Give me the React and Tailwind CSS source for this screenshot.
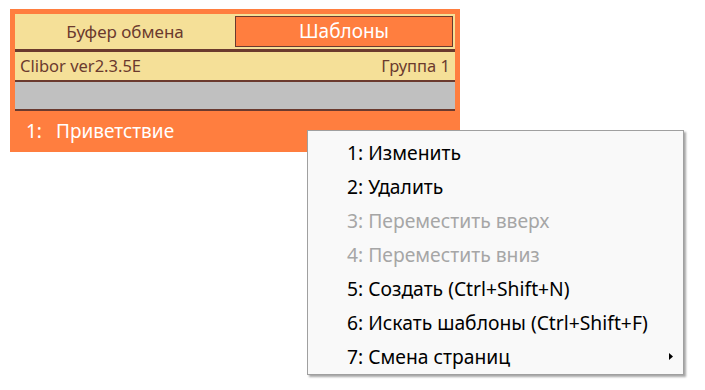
import React from 'react';

const items = [
  { label: '1: Изменить', on: true },
  { label: '2: Удалить', on: true },
  { label: '3: Переместить вверх', on: false },
  { label: '4: Переместить вниз', on: false },
  { label: '5: Создать (Ctrl+Shift+N)', on: true },
  { label: '6: Искать шаблоны (Ctrl+Shift+F)', on: true },
  { label: '7: Смена страниц', on: true, sub: true },
];

export default function App() {
  return (
    <div className="relative w-[705px] h-[390px] bg-white overflow-hidden" style={{ fontFamily: '"Noto Sans", "Open Sans", sans-serif' }}>
      <div className="absolute left-[10px] top-[9px] w-[450px] h-[143px] bg-[#ff7e3f] pt-[5px] px-[5px] flex flex-col">
        <div className="h-[35px] bg-[#f5e098] flex items-center pr-[2px]">
          <div className="flex-1 text-center text-[17px] text-[#6b3a2e]">Буфер обмена</div>
          <div className="w-[218px] h-[31px] bg-[#ff7e3f] border border-[#6b3a2e] flex items-center justify-center text-[19px] text-white">Шаблоны</div>
        </div>
        <div className="h-[3px] bg-[#6b3a2e]" />
        <div className="h-[28px] bg-[#f5e098] flex items-center justify-between px-[5px] text-[16.5px] text-[#6b3a2e]">
          <span>Clibor ver2.3.5E</span>
          <span>Группа 1</span>
        </div>
        <div className="h-[2px] bg-[#6b3a2e]" />
        <div className="h-[27px] bg-[#c0c0c0]" />
        <div className="h-[2px] bg-[#6b3a2e]" />
        <div className="flex-1 flex items-center pl-[11px] text-[19px] text-white">
          <span className="w-[30px]">1:</span>
          <span>Приветствие</span>
        </div>
      </div>

      <div className="absolute left-[307px] top-[130px] w-[377px] h-[245px] bg-[#f9f9f9] border border-[#a0a0a0] shadow-[2px_2px_2px_rgba(0,0,0,0.35)] pt-[5px]">
        {items.map((it) => (
          <div key={it.label} className={`relative h-[34px] flex items-center pl-[39px] text-[19.3px] ${it.on ? 'text-black' : 'text-[#a6a6a6]'}`}>
            {it.label}
            {it.sub && (
              <svg className="absolute right-[10px] top-[13px]" width="4" height="7" viewBox="0 0 4 7">
                <path d="M0 0 L4 3.5 L0 7 Z" fill="#000" />
              </svg>
            )}
          </div>
        ))}
      </div>
    </div>
  );
}
